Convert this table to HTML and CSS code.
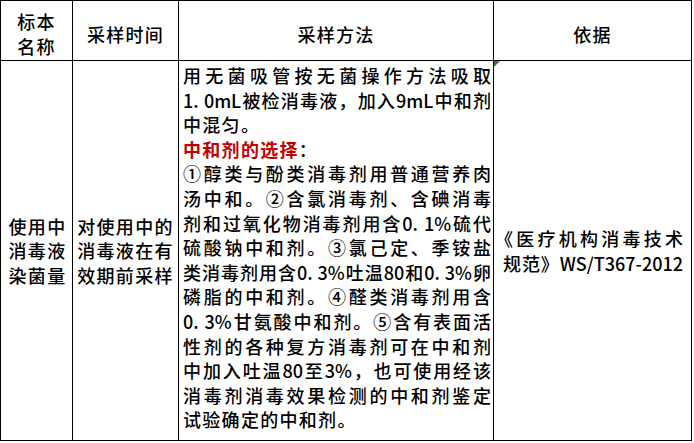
FILE: index.html
```html
<!DOCTYPE html>
<html lang="zh-CN">
<head>
<meta charset="utf-8">
<title>消毒液采样</title>
<link rel="stylesheet" href="styles.css">
</head>
<body>
<div class="sheet">
  <div class="cell head c1"><span class="ln">标本</span><span class="ln">名称</span></div>
  <div class="cell head c2">采样时间</div>
  <div class="cell head c3">采样方法</div>
  <div class="cell head c4">依据</div>

  <div class="cell body-cell c1 center">
    <span class="ln">使用中</span><span class="ln">消毒液</span><span class="ln">染菌量</span>
  </div>
  <div class="cell body-cell c2 center">
    <span class="ln">对使用中的</span><span class="ln">消毒液在有</span><span class="ln">效期前采样</span>
  </div>
  <div class="cell body-cell c3 method">
    <span class="ln j">用无菌吸管按无菌操作方法吸取</span>
    <span class="ln j">1. 0mL被检消毒液，加入9mL中和剂</span>
    <span class="ln">中混匀。</span>
    <span class="ln"><span class="red">中和剂的选择</span>：</span>
    <span class="ln j">①醇类与酚类消毒剂用普通营养肉</span>
    <span class="ln j">汤中和。②含氯消毒剂、含碘消毒</span>
    <span class="ln j">剂和过氧化物消毒剂用含0. 1%硫代</span>
    <span class="ln j">硫酸钠中和剂。③氯己定、季铵盐</span>
    <span class="ln j">类消毒剂用含0. 3%吐温80和0. 3%卵</span>
    <span class="ln j">磷脂的中和剂。④醛类消毒剂用含</span>
    <span class="ln j">0. 3%甘氨酸中和剂。⑤含有表面活</span>
    <span class="ln j">性剂的各种复方消毒剂可在中和剂</span>
    <span class="ln j">中加入吐温80至3%，也可使用经该</span>
    <span class="ln j">消毒剂消毒效果检测的中和剂鉴定</span>
    <span class="ln">试验确定的中和剂。</span>
  </div>
  <div class="cell body-cell c4 basis">
    <span class="flag"></span>
    <span class="ln j first">《医疗机构消毒技术</span>
    <span class="ln j second">规范》WS/T367-2012</span>
  </div>
</div>
</body>
</html>
```

FILE: styles.css
```css
html, body {
  margin: 0;
  padding: 0;
  background: #ffffff;
}

body {
  font-family: "Noto Sans CJK SC", "DejaVu Sans", sans-serif;
  font-size: 18px;
  font-weight: 500;
  color: #000000;
}

.sheet {
  display: grid;
  grid-template-columns: 72px 106px 315px 198px;
  grid-template-rows: 60px 380px;
  width: 692px;
  box-sizing: border-box;
  border-left: 1px solid #000;
  border-top: 1px solid #000;
}

.cell {
  box-sizing: border-box;
  border-right: 1px solid #000;
  border-bottom: 1px solid #000;
  line-height: 24.6px;
  letter-spacing: 1.3px;
  position: relative;
}

.ln {
  display: block;
  white-space: pre;
}

.j {
  text-align: justify;
  text-align-last: justify;
  letter-spacing: 0;
}

.head {
  display: flex;
  flex-direction: column;
  align-items: center;
  justify-content: center;
  text-align: center;
  padding-top: 7px;
}

.center {
  display: flex;
  flex-direction: column;
  justify-content: center;
  align-items: center;
}

.body-cell.c1 {
  padding-left: 2px;
}

.method {
  padding: 2px 2px 0 4px;
}

.red {
  color: #c00000;
  font-weight: 700;
}

.basis {
  display: flex;
  flex-direction: column;
  justify-content: center;
  padding: 0 8px 0 1px;
}

.basis .second {
  margin-left: 8px;
}

.flag {
  position: absolute;
  left: 0;
  top: 0;
  width: 0;
  height: 0;
  border-top: 6px solid #3a7d2c;
  border-right: 6px solid transparent;
}
```
